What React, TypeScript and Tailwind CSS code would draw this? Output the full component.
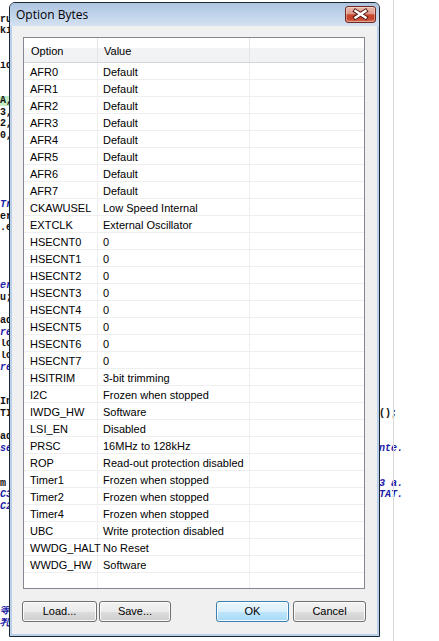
import React from "react";

type Line = { l?: string; lc?: string; hl?: boolean; r?: string; rc?: string };

// Editor lines sitting behind the dialog; only their edges peek out.
const editorLines: Record<number, Line> = {
  1: { l: "ru" },
  2: { l: "ki" },
  5: { l: "id" },
  8: { l: "A,", hl: true },
  9: { l: "3," },
  10: { l: "2," },
  11: { l: "0," },
  17: { l: "Tr", lc: "blue" },
  18: { l: "er" },
  19: { l: ".e" },
  24: { l: "er", lc: "blue" },
  25: { l: "u;" },
  27: { l: "ad" },
  28: { l: "re", lc: "blue" },
  29: { l: "lo" },
  30: { l: "lo" },
  31: { l: "re", lc: "blue" },
  34: { l: "In" },
  35: { l: "TI", r: "();" },
  37: { l: "ad" },
  38: { l: "se", lc: "blue", r: "nte.", rc: "blue" },
  41: { l: "m", r: "3 a.", rc: "blue" },
  42: { l: "C3", lc: "blue", r: "TAT.", rc: "blue" },
  43: { l: "C2", lc: "blue" },
  52: { l: "等", lc: "blue" },
  53: { l: "乳", lc: "blue" },
};

const options: [string, string][] = [
  ["AFR0", "Default"],
  ["AFR1", "Default"],
  ["AFR2", "Default"],
  ["AFR3", "Default"],
  ["AFR4", "Default"],
  ["AFR5", "Default"],
  ["AFR6", "Default"],
  ["AFR7", "Default"],
  ["CKAWUSEL", "Low Speed Internal"],
  ["EXTCLK", "External Oscillator"],
  ["HSECNT0", "0"],
  ["HSECNT1", "0"],
  ["HSECNT2", "0"],
  ["HSECNT3", "0"],
  ["HSECNT4", "0"],
  ["HSECNT5", "0"],
  ["HSECNT6", "0"],
  ["HSECNT7", "0"],
  ["HSITRIM", "3-bit trimming"],
  ["I2C", "Frozen when stopped"],
  ["IWDG_HW", "Software"],
  ["LSI_EN", "Disabled"],
  ["PRSC", "16MHz to 128kHz"],
  ["ROP", "Read-out protection disabled"],
  ["Timer1", "Frozen when stopped"],
  ["Timer2", "Frozen when stopped"],
  ["Timer4", "Frozen when stopped"],
  ["UBC", "Write protection disabled"],
  ["WWDG_HALT", "No Reset"],
  ["WWDG_HW", "Software"],
];

function Editor() {
  const lines = Array.from({ length: 56 }, (_, i) => editorLines[i] ?? {});
  return (
    <div className="flex flex-col pt-[2.4px] font-['Liberation_Mono',monospace] text-[10px] font-bold">
      {lines.map((ln, i) => (
        <div key={i} className="flex h-[11.6px] items-center whitespace-nowrap leading-none">
          <div className="w-[379px] overflow-hidden">
            {ln.l && (
              <span
                className={
                  (ln.lc === "blue" ? "italic text-[#1c1ca8] " : "text-[#111] ") +
                  (ln.hl ? "bg-[#c4efc4]" : "")
                }
              >
                {ln.l}
              </span>
            )}
          </div>
          {ln.r && (
            <span className={ln.rc === "blue" ? "italic text-[#1c1ca8]" : "text-[#111]"}>{ln.r}</span>
          )}
        </div>
      ))}
      <div className="mt-[-3px] pl-[88px] text-[10px] italic leading-none text-[#1c1ca8]">TIM1_SOCBTFIF_255</div>
    </div>
  );
}

function CloseButton() {
  return (
    <div className="mt-[3px] mr-[3px] h-[17px] w-[31px] rounded-[3px] border border-[#6e2a1f] bg-[linear-gradient(180deg,#ebb9ad_0%,#dc9a8b_45%,#c9472e_52%,#c4442b_78%,#d9795f_100%)] shadow-[inset_0_0_0_1px_rgba(255,255,255,0.35)]">
      <svg width="29" height="15" viewBox="0 0 29 15" className="block">
        <path d="M9.5 4 L19.5 10.5 M19.5 4 L9.5 10.5" stroke="#5a1d14" strokeWidth="4.4" strokeLinecap="square" fill="none" />
        <path d="M9.5 4 L19.5 10.5 M19.5 4 L9.5 10.5" stroke="#ffffff" strokeWidth="2.4" strokeLinecap="square" fill="none" />
      </svg>
    </div>
  );
}

function WinButton({ label, w, primary, className = "" }: { label: string; w: string; primary?: boolean; className?: string }) {
  return (
    <div
      className={
        "flex h-[21px] items-center justify-center rounded-[3px] border text-[11px] text-black shadow-[inset_0_0_0_1px_rgba(255,255,255,0.85)] " +
        w +
        " " +
        (primary
          ? "border-[#3c7fb1] bg-[linear-gradient(180deg,#eaf6fd_0%,#d9f0fc_50%,#bee6fd_51%,#a7d9f5_100%)]"
          : "border-[#707070] bg-[linear-gradient(180deg,#f2f2f2_0%,#ebebeb_50%,#dddddd_51%,#cfcfcf_100%)]") +
        " " +
        className
      }
    >
      {label}
    </div>
  );
}

function OptionList() {
  return (
    <div className="flex h-[552px] w-[342px] flex-col border border-[#828790] bg-white text-[11px] text-black">
      <div className="grid h-[25px] grid-cols-[74px_152px_114px] border-b border-[#d5d5d5] bg-[linear-gradient(180deg,#ffffff_0%,#ffffff_40%,#f3f4f6_42%,#f1f2f4_100%)]">
        <div className="flex items-center border-r border-[#e3e4e6] pl-[7px] pt-[3px]">Option</div>
        <div className="flex items-center border-r border-[#e3e4e6] pl-[6px] pt-[3px]">Value</div>
        <div />
      </div>
      {options.map(([k, v]) => (
        <div key={k} className="grid h-[17px] grid-cols-[74px_152px_114px]">
          <div className="flex items-center border-b border-r border-[#efefef] pl-[6px] pt-[2px] leading-none">{k}</div>
          <div className="flex items-center whitespace-nowrap border-b border-r border-[#efefef] pl-[5px] pt-[2px] leading-none">{v}</div>
          <div className="border-b border-[#efefef]" />
        </div>
      ))}
      <div className="grid flex-1 grid-cols-[74px_152px_114px]">
        <div className="border-r border-[#efefef]" />
        <div className="border-r border-[#efefef]" />
        <div />
      </div>
    </div>
  );
}

export default function App() {
  return (
    <div className="relative h-[641px] w-[439px] overflow-hidden bg-white font-['Liberation_Sans',Arial,sans-serif]">
      <Editor />
      {/* editor right-margin guide */}
      <div className="absolute left-[393px] top-0 h-full w-px bg-[#d8d8d8]" />

      {/* Option Bytes dialog window */}
      <div className="absolute left-[9px] top-[2px] flex h-[635px] w-[371px] flex-col overflow-hidden rounded-t-[6px] border border-[#1d2732] bg-[#b8d0ea]">
        <div className="flex h-[23px] shrink-0 items-start justify-between bg-[linear-gradient(180deg,#adc4e0_0%,#c0d3ea_50%,#d4e2f2_100%)]">
          <span className="pl-[6px] pt-[4px] font-['Open_Sans',sans-serif] text-[12px] leading-[15px] text-black">Option Bytes</span>
          <CloseButton />
        </div>
        <div className="mx-[2px] mb-[2px] flex flex-1 flex-col bg-[#f0f0f0] px-[11px] pt-[11px]">
          <OptionList />
          <div className="mt-[12px] flex">
            <WinButton label="Load..." w="w-[75px]" className="ml-[-1px]" />
            <WinButton label="Save..." w="w-[72px]" className="ml-[2px]" />
            <WinButton label="OK" w="w-[73px]" primary className="ml-[45px]" />
            <WinButton label="Cancel" w="w-[73px]" className="ml-[4px]" />
          </div>
        </div>
      </div>
    </div>
  );
}
